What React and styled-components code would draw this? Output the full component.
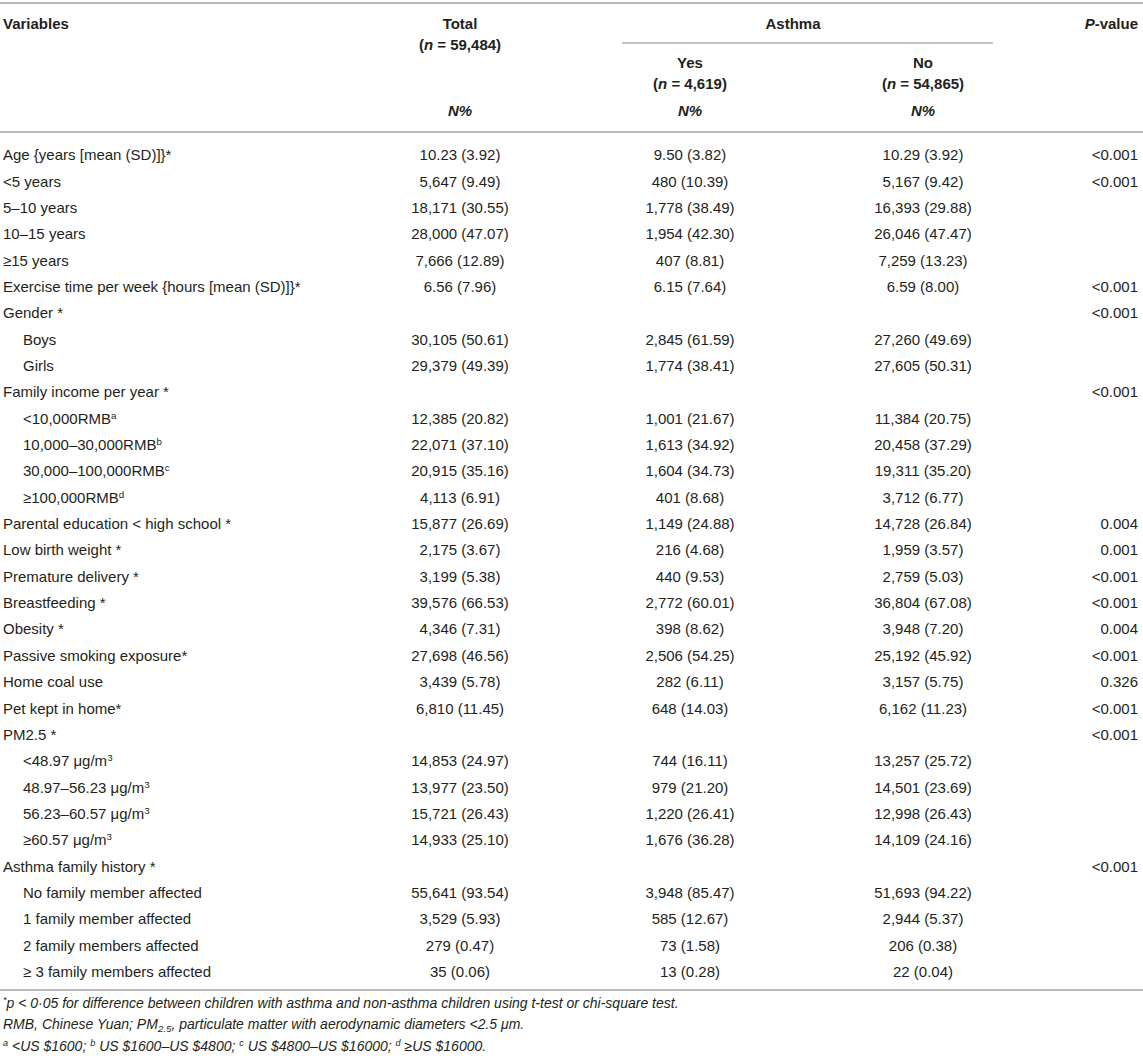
import styled, { createGlobalStyle } from "styled-components"

const COLS = "360px 200px 260px 206px 1fr"

const rows = [
    { label: "Age {years [mean (SD)]}*", total: "10.23 (3.92)", yes: "9.50 (3.82)", no: "10.29 (3.92)", p: "<0.001" },
    { label: "<5 years", total: "5,647 (9.49)", yes: "480 (10.39)", no: "5,167 (9.42)", p: "<0.001" },
    { label: "5–10 years", total: "18,171 (30.55)", yes: "1,778 (38.49)", no: "16,393 (29.88)" },
    { label: "10–15 years", total: "28,000 (47.07)", yes: "1,954 (42.30)", no: "26,046 (47.47)" },
    { label: "≥15 years", total: "7,666 (12.89)", yes: "407 (8.81)", no: "7,259 (13.23)" },
    { label: "Exercise time per week {hours [mean (SD)]}*", total: "6.56 (7.96)", yes: "6.15 (7.64)", no: "6.59 (8.00)", p: "<0.001" },
    { label: "Gender *", p: "<0.001" },
    { label: "Boys", sub: true, total: "30,105 (50.61)", yes: "2,845 (61.59)", no: "27,260 (49.69)" },
    { label: "Girls", sub: true, total: "29,379 (49.39)", yes: "1,774 (38.41)", no: "27,605 (50.31)" },
    { label: "Family income per year *", p: "<0.001" },
    { label: "<10,000RMB", sup: "a", sub: true, total: "12,385 (20.82)", yes: "1,001 (21.67)", no: "11,384 (20.75)" },
    { label: "10,000–30,000RMB", sup: "b", sub: true, total: "22,071 (37.10)", yes: "1,613 (34.92)", no: "20,458 (37.29)" },
    { label: "30,000–100,000RMB", sup: "c", sub: true, total: "20,915 (35.16)", yes: "1,604 (34.73)", no: "19,311 (35.20)" },
    { label: "≥100,000RMB", sup: "d", sub: true, total: "4,113 (6.91)", yes: "401 (8.68)", no: "3,712 (6.77)" },
    { label: "Parental education < high school *", total: "15,877 (26.69)", yes: "1,149 (24.88)", no: "14,728 (26.84)", p: "0.004" },
    { label: "Low birth weight *", total: "2,175 (3.67)", yes: "216 (4.68)", no: "1,959 (3.57)", p: "0.001" },
    { label: "Premature delivery *", total: "3,199 (5.38)", yes: "440 (9.53)", no: "2,759 (5.03)", p: "<0.001" },
    { label: "Breastfeeding *", total: "39,576 (66.53)", yes: "2,772 (60.01)", no: "36,804 (67.08)", p: "<0.001" },
    { label: "Obesity *", total: "4,346 (7.31)", yes: "398 (8.62)", no: "3,948 (7.20)", p: "0.004" },
    { label: "Passive smoking exposure*", total: "27,698 (46.56)", yes: "2,506 (54.25)", no: "25,192 (45.92)", p: "<0.001" },
    { label: "Home coal use", total: "3,439 (5.78)", yes: "282 (6.11)", no: "3,157 (5.75)", p: "0.326" },
    { label: "Pet kept in home*", total: "6,810 (11.45)", yes: "648 (14.03)", no: "6,162 (11.23)", p: "<0.001" },
    { label: "PM2.5 *", p: "<0.001" },
    { label: "<48.97 μg/m", sup: "3", sub: true, total: "14,853 (24.97)", yes: "744 (16.11)", no: "13,257 (25.72)" },
    { label: "48.97–56.23 μg/m", sup: "3", sub: true, total: "13,977 (23.50)", yes: "979 (21.20)", no: "14,501 (23.69)" },
    { label: "56.23–60.57 μg/m", sup: "3", sub: true, total: "15,721 (26.43)", yes: "1,220 (26.41)", no: "12,998 (26.43)" },
    { label: "≥60.57 μg/m", sup: "3", sub: true, total: "14,933 (25.10)", yes: "1,676 (36.28)", no: "14,109 (24.16)" },
    { label: "Asthma family history *", p: "<0.001" },
    { label: "No family member affected", sub: true, total: "55,641 (93.54)", yes: "3,948 (85.47)", no: "51,693 (94.22)" },
    { label: "1 family member affected", sub: true, total: "3,529 (5.93)", yes: "585 (12.67)", no: "2,944 (5.37)" },
    { label: "2 family members affected", sub: true, total: "279 (0.47)", yes: "73 (1.58)", no: "206 (0.38)" },
    { label: "≥ 3 family members affected", sub: true, total: "35 (0.06)", yes: "13 (0.28)", no: "22 (0.04)" },
]

function App() {
    return (
        <Page>
            <GlobalStyle />
            <Head>
                <HeadLeft>Variables</HeadLeft>
                <HeadStack>
                    <span>Total</span>
                    <span>(<i>n</i> = 59,484)</span>
                    <NLabel>N%</NLabel>
                </HeadStack>
                <AsthmaGroup>
                    <span>Asthma</span>
                    <GroupRule />
                    <SubHeads>
                        <HeadStack>
                            <span>Yes</span>
                            <span>(<i>n</i> = 4,619)</span>
                            <NLabel>N%</NLabel>
                        </HeadStack>
                        <HeadStack>
                            <span>No</span>
                            <span>(<i>n</i> = 54,865)</span>
                            <NLabel>N%</NLabel>
                        </HeadStack>
                    </SubHeads>
                </AsthmaGroup>
                <HeadRight>
                    <i>P</i>-value
                </HeadRight>
            </Head>
            <Body>
                {rows.map((r, i) => (
                    <Row key={i}>
                        <Label $sub={r.sub}>
                            {r.label}
                            {r.sup && <Sup>{r.sup}</Sup>}
                        </Label>
                        <Value>{r.total}</Value>
                        <Value>{r.yes}</Value>
                        <Value>{r.no}</Value>
                        <PValue>{r.p}</PValue>
                    </Row>
                ))}
            </Body>
            <Notes>
                <p>
                    <Sup>*</Sup>p &lt; 0·05 for difference between children with asthma and non-asthma children using t-test or chi-square test.
                </p>
                <p>
                    RMB, Chinese Yuan; PM<Sub>2.5</Sub>, particulate matter with aerodynamic diameters &lt;2.5 μm.
                </p>
                <p>
                    <Sup>a</Sup> &lt;US $1600; <Sup>b</Sup> US $1600–US $4800; <Sup>c</Sup> US $4800–US $16000; <Sup>d</Sup> ≥US $16000.
                </p>
            </Notes>
        </Page>
    )
}

const GlobalStyle = createGlobalStyle`
    body {
        margin: 0;
        background: #ffffff;
    }
    p {
        margin: 0;
    }
`

const Page = styled.div`
    width: 1143px;
    padding-top: 2px;
    font-family: "Liberation Sans", Arial, Helvetica, sans-serif;
    font-size: 15px;
    color: #231f20;
`

const Head = styled.div`
    display: grid;
    grid-template-columns: ${COLS};
    border-top: 2px solid #b9b9b9;
    border-bottom: 2px solid #b9b9b9;
    padding: 8.5px 0 9.5px;
    line-height: 21px;
    font-weight: bold;
`

const HeadLeft = styled.div`
    padding-left: 3px;
`

const HeadRight = styled.div`
    text-align: right;
    padding-right: 5px;
`

const HeadStack = styled.div`
    display: flex;
    flex-direction: column;
    align-items: center;
`

const NLabel = styled.span`
    margin-top: auto;
    font-style: italic;
`

const AsthmaGroup = styled.div`
    grid-column: 3 / 5;
    display: flex;
    flex-direction: column;
    align-items: center;
`

const GroupRule = styled.div`
    align-self: stretch;
    height: 2px;
    margin: 8px 33px 8.5px 62px;
    background: #c4c4c4;
`

const SubHeads = styled.div`
    display: grid;
    grid-template-columns: 260px 206px;
    align-self: stretch;
    flex: 1;

    ${NLabel} {
        margin-top: 6px;
    }
`

const Body = styled.div`
    padding: 9.8px 0 4px;
    border-bottom: 2px solid #b9b9b9;
`

const Row = styled.div`
    display: grid;
    grid-template-columns: ${COLS};
    height: 26.35px;
    line-height: 26.35px;
    white-space: nowrap;
`

const Label = styled.div`
    padding-left: ${(p) => (p.$sub ? "23px" : "3px")};
`

const Value = styled.div`
    text-align: center;
`

const PValue = styled.div`
    text-align: right;
    padding-right: 5px;
`

const Sup = styled.sup`
    font-size: 0.65em;
    line-height: 0;
    vertical-align: 0.55em;
`

const Sub = styled.sub`
    font-size: 0.7em;
    line-height: 0;
    vertical-align: -0.3em;
`

const Notes = styled.div`
    padding: 1.5px 0 0 3px;
    font-size: 14px;
    line-height: 21.5px;
    font-style: italic;
`

export default App
